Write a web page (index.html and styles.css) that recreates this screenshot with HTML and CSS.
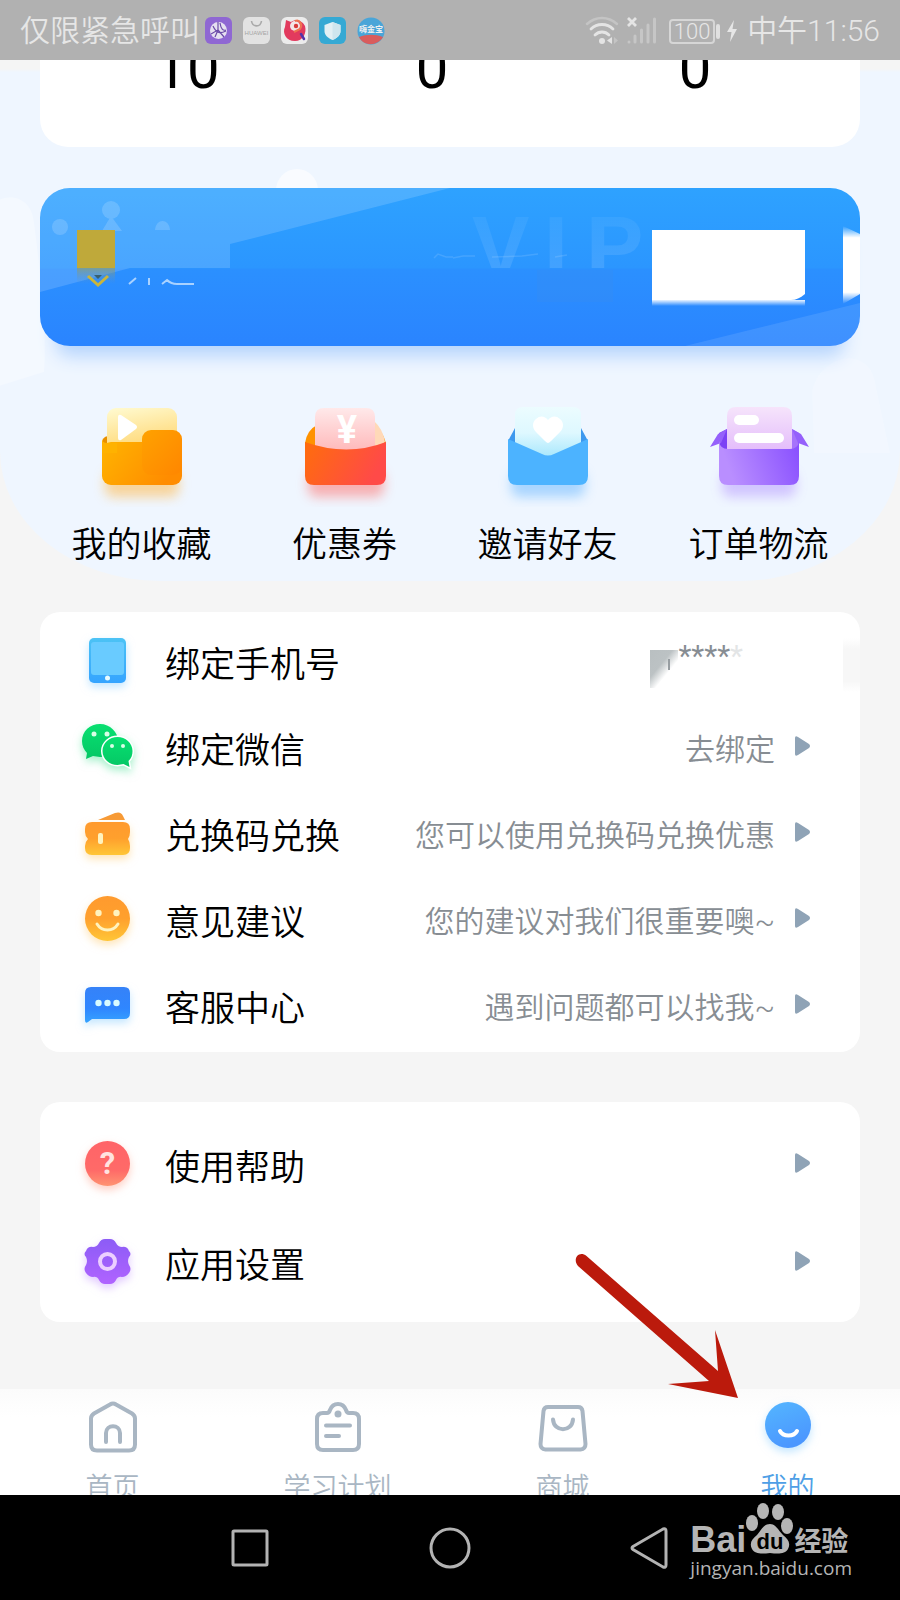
FILE: index.html
```
<!DOCTYPE html>
<html lang="zh-CN">
<head>
  <meta charset="UTF-8">
  <meta name="viewport" content="width=device-width, initial-scale=1">
  <title>我的</title>
  <link rel="stylesheet" href="styles.css">
</head>
<body>

<!-- Status bar -->
<header class="status-bar">
  <span>仅限紧急呼叫</span>
  <div class="status-apps">
    <svg width="27" height="27" viewBox="0 0 27 27">
      <rect width="27" height="27" rx="6" fill="#8f67d3"/>
      <circle cx="13.500" cy="13.500" r="8.500" fill="#e6e0f0"/>
      <path d="M13 5v8l-7 4M13 13l6 7M8 9c4 9 9 7 13 5M15 6c1 6 3 8 6 7M10 20l3-7" fill="none" stroke="#6b4aa8" stroke-width="1.200"/>
    </svg>
    <svg width="27" height="27" viewBox="0 0 27 27">
      <rect width="27" height="27" rx="6" fill="#e2e2e2"/>
      <path d="M8.500 4c1 6.500 9 6.500 10 0" fill="none" stroke="#a9a9a9" stroke-width="1.600"/>
      <text x="13.500" y="18" class="app-name" fill="#a5a5a5">HUAWEI</text>
    </svg>
    <svg width="27" height="27" viewBox="0 0 27 27">
      <rect width="27" height="27" rx="6" fill="#ececec"/>
      <path d="M5 3l5 2c5-4 12-1 14 4 2 7-2 15-10 15-9 0-13-8-10-14z" fill="#e23a5e"/>
      <circle cx="14" cy="9" r="5" fill="#f3e6e6"/>
      <circle cx="15" cy="9" r="2.200" fill="#d93a3a"/>
      <path d="M14 4c5-2 8 4 5 8l-6 3" fill="none" stroke="#ee7350" stroke-width="2"/>
      <path d="M20 17l3 5" stroke="#5533a8" stroke-width="2.500" stroke-linecap="round"/>
    </svg>
    <svg width="27" height="27" viewBox="0 0 27 27">
      <rect width="27" height="27" rx="6" fill="#35a9d4"/>
      <path d="M13.500 5l8 3v6c0 4-3 7-8 9-5-2-8-5-8-9V8z" fill="#e3f0f4"/>
      <path d="M13.500 5l8 3v6c0 4-3 7-8 9z" fill="#cfe6ee"/>
    </svg>
    <svg width="28" height="28" viewBox="0 0 28 28">
      <circle cx="14" cy="14" r="13.500" fill="#4aa5d8"/>
      <path d="M2 20c8-3 16-3 24 0-5 9-19 10-24 0z" fill="#d95c5c"/>
      <text x="14" y="15" class="app-name app-name-cn" fill="#f0f0f0">嗨金宝</text>
    </svg>
  </div>
  <div class="status-right">
    <svg width="72" height="30" viewBox="0 0 72 30" fill="none" stroke="#e4e4e4" stroke-linecap="round">
      <path d="M2 8c9-8 21-8 30 0" stroke="#c4c4c4" stroke-width="2.500"/>
      <path d="M6 13c6-6 16-6 22 0M10 19c4-4 10-4 14 0" stroke-width="2.800"/>
      <circle cx="17" cy="25" r="3" fill="#e4e4e4" stroke="none"/>
      <path d="M27 21v7l-5-3.500z" fill="#e4e4e4" stroke="none"/>
      <path d="M29 21v7l4-3.500z" fill="#c4c4c4" stroke="none"/>
      <path d="M43 2l8 8M51 2l-8 8" stroke-width="2.800" stroke-linecap="butt"/>
      <path d="M44 26v0M50 20v6M56.500 14v12M63 9v17M69.500 3v23" stroke="#c6c6c6" stroke-width="3"/>
    </svg>
    <div class="battery">100</div>
    <svg width="10" height="22" viewBox="0 0 10 22"><path d="M7 0L0 12h4.500L3 22l7-13H5.500z" fill="#e6e6e6"/></svg>
    <time>中午11:56</time>
  </div>
</header>

<main>
  <section class="hero">
    <svg class="hero-decor" viewBox="0 0 900 521" preserveAspectRatio="none">
      <circle cx="297" cy="130" r="21" fill="#fff" opacity=".6"/>
      <path d="M-20 170c5-40 50-44 54-8 4 30 14 110 10 150l-64 20z" fill="#fff" opacity=".3"/>
      <path d="M812 331c10-40 60-46 64-4l14 66h-76z" fill="#fff" opacity=".18"/>
    </svg>

    <div class="stats">
      <span>10</span>
      <span>0</span>
      <span>0</span>
    </div>

    <div class="vip-card">
      <svg viewBox="0 0 820 158" preserveAspectRatio="none">
        <defs>
          <linearGradient id="goldFade" x2="0" y2="1">
            <stop offset="0" stop-color="#8f9c6a" stop-opacity=".7"/>
            <stop offset="1" stop-color="#5c90c8" stop-opacity="0"/>
          </linearGradient>
          <linearGradient id="vipFade" x2="0" y2="1">
            <stop offset="0" stop-color="#fff" stop-opacity=".03"/>
            <stop offset="1" stop-color="#fff" stop-opacity=".14"/>
          </linearGradient>
          <linearGradient id="whiteFade" x2="0" y2="1">
            <stop offset="0" stop-color="#fff" stop-opacity="0"/>
            <stop offset=".15" stop-color="#fff"/>
            <stop offset=".85" stop-color="#fff"/>
            <stop offset="1" stop-color="#fff" stop-opacity="0"/>
          </linearGradient>
          <linearGradient id="whiteEnd" x2="0" y2="1">
            <stop offset="0" stop-color="#fff" stop-opacity=".9"/>
            <stop offset="1" stop-color="#fff" stop-opacity="0"/>
          </linearGradient>
          <clipPath id="vipClip"><rect width="820" height="80"/></clipPath>
        </defs>
        <path d="M0 0h410L190 56v24H90L0 104z" fill="#fff" opacity=".15"/>
        <path d="M645 158l175-43v43z" fill="#fff" opacity=".1"/>
        <g fill="#fff" opacity=".16">
          <circle cx="20" cy="39" r="8"/>
          <circle cx="71" cy="22" r="9"/>
          <path d="M71 28l11 15H62z"/>
          <path d="M115 42c1-12 14-12 15 0z"/>
        </g>
        <g class="vip-word" fill="url(#vipFade)" clip-path="url(#vipClip)">
          <text x="432" y="88">V</text>
          <text x="504" y="88">I</text>
          <text x="546" y="88">P</text>
        </g>
        <path d="M394 70l4-4 8 3h7M413 70l10-2h12M452 69l30-1 16-2M515 69l12-2" fill="none" stroke="#fff" stroke-width="1.500" opacity=".12"/>
        <rect x="37" y="42" width="38" height="38" fill="#bfa93a"/>
        <rect x="37" y="80" width="38" height="16" fill="url(#goldFade)"/>
        <path d="M48 88l10 9 10-9" fill="none" stroke="#c9b53c" stroke-width="3"/>
        <path d="M54 87h8l-4 4z" fill="#38606e"/>
        <path d="M89 96l7-6M109 97v-7M122 96l5-4c3 3 5 4 10 4h17" fill="none" stroke="#d4e8ff" stroke-width="2" opacity=".75"/>
        <rect x="497" y="82" width="76" height="32" fill="#4a90e0" opacity=".15"/>
        <path d="M612 42h153v64c-5 4-9 6-14 6H612z" fill="#fff"/>
        <rect x="612" y="112" width="153" height="6" fill="url(#whiteEnd)"/>
        <path d="M803 38l17 8v60l-17 10z" fill="url(#whiteFade)"/>
      </svg>
    </div>

    <nav class="quick">
      <a href="#favorites">
        <svg width="110" height="110" viewBox="0 0 110 110">
          <defs>
            <linearGradient id="fold" x2="1" y2=".4"><stop stop-color="#ffb400"/><stop offset="1" stop-color="#ff8c00"/></linearGradient>
            <linearGradient id="foldTab" x2="1" y2="1"><stop stop-color="#ffa200"/><stop offset="1" stop-color="#ff8600"/></linearGradient>
            <linearGradient id="foldSheet" x2=".3" y2="1"><stop stop-color="#fffbd2"/><stop offset="1" stop-color="#ffd672"/></linearGradient>
            <filter id="soft" x="-30%" y="-60%" width="160%" height="260%"><feGaussianBlur stdDeviation="6"/></filter>
          </defs>
          <rect x="18" y="74" width="74" height="26" rx="8" fill="#ffb84a" opacity=".55" filter="url(#soft)"/>
          <path d="M15 46q0-6 6-7l30-3v20H15z" fill="#e89000"/>
          <rect x="20" y="11" width="70" height="44" rx="9" fill="url(#foldSheet)"/>
          <path d="M31 20q0-3 3-2l15 10q2 2 0 4L34 43q-3 1-3-2z" fill="#fff"/>
          <rect x="15" y="45" width="80" height="43" rx="9" fill="url(#fold)"/>
          <path d="M15 41q0 5 5 5h10v10H15z" fill="#ffb200"/>
          <rect x="55" y="33" width="40" height="45" rx="9" fill="url(#foldTab)"/>
        </svg>
        <span>我的收藏</span>
      </a>
      <a href="#coupons">
        <svg width="110" height="110" viewBox="0 0 110 110">
          <defs>
            <linearGradient id="coupon" x2="1" y2=".3"><stop stop-color="#ff6d0c"/><stop offset="1" stop-color="#ff4a48"/></linearGradient>
            <linearGradient id="couponSheet" x2="0" y2="1"><stop stop-color="#ffe9ea"/><stop offset="1" stop-color="#ffb9ba"/></linearGradient>
          </defs>
          <rect x="18" y="74" width="76" height="26" rx="8" fill="#ff6a66" opacity=".5" filter="url(#soft)"/>
          <path d="M15 46q2-13 12-18h56q10 6 13 18l-20 8H30z" fill="#ff9200"/>
          <path d="M84 24q9 8 11 21l-11 8z" fill="#ffd9b8"/>
          <path d="M25 20q0-9 9-9h42q9 0 9 9v34H25z" fill="url(#couponSheet)"/>
          <text x="57" y="46" class="yen">¥</text>
          <path d="M15 45q42 15 81 0v34q0 9-9 9H24q-9 0-9-9z" fill="url(#coupon)"/>
        </svg>
        <span>优惠券</span>
      </a>
      <a href="#invite">
        <svg width="110" height="110" viewBox="0 0 110 110">
          <defs>
            <linearGradient id="inviteSheet" x2="0" y2="1"><stop stop-color="#ecfcff"/><stop offset=".5" stop-color="#def8ff"/><stop offset="1" stop-color="#a4e6fc"/></linearGradient>
          </defs>
          <rect x="18" y="74" width="74" height="26" rx="8" fill="#62b4ff" opacity=".5" filter="url(#soft)"/>
          <path d="M15 44l7-13h66l7 13-40 18z" fill="#3d98ee"/>
          <path d="M22 18q0-8 8-8h50q8 0 8 8v35L55 62 22 53z" fill="url(#inviteSheet)"/>
          <path d="M55 46q-1 0-3-2L43 35c-4-4-4-10 0-13 4-4 9-3 12 1 3-4 8-5 12-1 4 3 4 9 0 13l-9 9q-2 2-3 2z" fill="#fff"/>
          <path d="M15 42l34 15q6 3 12 0l34-15v37q0 9-9 9H24q-9 0-9-9z" fill="#4cb3ff"/>
        </svg>
        <span>邀请好友</span>
      </a>
      <a href="#orders">
        <svg width="110" height="110" viewBox="0 0 110 110">
          <defs>
            <linearGradient id="box" x2="1" y2="-.2"><stop stop-color="#b98eff"/><stop offset="1" stop-color="#864cff"/></linearGradient>
            <linearGradient id="boxSheet" x2="0" y2="1"><stop stop-color="#f6e4fb"/><stop offset="1" stop-color="#e3bbfb"/></linearGradient>
          </defs>
          <rect x="18" y="74" width="74" height="26" rx="8" fill="#a47cff" opacity=".4" filter="url(#soft)"/>
          <path d="M15 36l8-4v22H15z" fill="#7c41f5"/>
          <path d="M95 36l-7-4v22h7z" fill="#a673fb"/>
          <path d="M6 50l8-13 9-5-6 14zM105 50l-8-13-9-5 6 14z" fill="#9560fb"/>
          <path d="M23 19q0-9 9-9h47q9 0 9 9v36H23z" fill="url(#boxSheet)"/>
          <rect x="30" y="18" width="25" height="10" rx="5" fill="#fff"/>
          <rect x="30" y="36" width="50" height="10" rx="5" fill="#fff"/>
          <path d="M15 44q1 8 9 8h62q8 0 9-8v35q0 9-9 9H24q-9 0-9-9z" fill="url(#box)"/>
        </svg>
        <span>订单物流</span>
      </a>
    </nav>
  </section>

  <!-- Account list -->
  <section class="card account">
    <a class="row" href="#phone">
      <svg class="row-icon" viewBox="0 0 54 60">
        <defs><linearGradient id="phone" x2="0" y2="1"><stop stop-color="#4cc3f5"/><stop offset="1" stop-color="#35a4ff"/></linearGradient></defs>
        <rect x="9" y="5" width="37" height="45" rx="5" fill="url(#phone)" class="glow-blue"/>
        <rect x="11" y="9" width="33" height="33" rx="3" fill="#69cbff"/>
        <circle cx="27.500" cy="45" r="2.500" fill="#e8fbff"/>
      </svg>
      <span class="row-label">绑定手机号</span>
      <span class="row-hint masked">
        <svg width="28" height="38" viewBox="0 0 28 38">
          <defs><linearGradient id="smudge" x2=".9" y2="1"><stop stop-color="#b9bfc1"/><stop offset=".4" stop-color="#bcc2c4"/><stop offset=".65" stop-color="#fff"/></linearGradient></defs>
          <path d="M0 0h28v38H0z" fill="url(#smudge)"/>
          <path d="M19 9v11" stroke="#989ea2" stroke-width="2"/>
        </svg>****<i>*</i>
      </span>
      <span class="row-smear"></span>
    </a>
    <a class="row" href="#wechat">
      <svg class="row-icon" viewBox="0 0 54 60">
        <defs><linearGradient id="wx" x2="0" y2="1"><stop stop-color="#07e070"/><stop offset="1" stop-color="#05c765"/></linearGradient></defs>
        <g class="glow-green">
          <path d="M20 5C10 5 2 12 2 22c0 5 2 9 5 12l-1 6 7-3 7 1c10 0 18-7 18-16S30 5 20 5z" fill="url(#wx)"/>
          <path d="M37.500 18c-8 0-15 6-15 14s7 14 15 14l6-1 6 3-1-6c3-3 4-6 4-10 0-8-7-14-15-14z" fill="url(#wx)" stroke="#fff" stroke-width="3" paint-order="stroke"/>
        </g>
        <g fill="#d9ffe6"><circle cx="14" cy="15" r="2.500"/><circle cx="27" cy="15" r="2.500"/><circle cx="32" cy="27" r="2"/><circle cx="43" cy="27" r="2"/></g>
      </svg>
      <span class="row-label">绑定微信</span>
      <span class="row-hint">去绑定</span>
      <svg class="row-arrow" viewBox="0 0 15 20"><path d="M0 2q0-3 3-1l11 7q2 2 0 4L3 19q-3 2-3-1z"/></svg>
    </a>
    <a class="row" href="#redeem">
      <svg class="row-icon" viewBox="0 0 54 60">
        <defs><linearGradient id="orange" x2="0" y2="1"><stop stop-color="#ff9a2e"/><stop offset=".5" stop-color="#ffa02d"/><stop offset="1" stop-color="#ffc637"/></linearGradient></defs>
        <path d="M18 15l17-7q6-2 8 3l2 4z" fill="#f79a35"/>
        <path d="M12 17h31q7 0 7 7v3q0 4-2 7 2 3 2 7v2q0 7-7 7H12q-7 0-7-7v-2q0-4 3-7-3-3-3-7v-3q0-7 7-7z" fill="url(#orange)" class="glow-orange"/>
        <rect x="18" y="28" width="5" height="11" rx="2" fill="#fff3bf"/>
      </svg>
      <span class="row-label">兑换码兑换</span>
      <span class="row-hint">您可以使用兑换码兑换优惠</span>
      <svg class="row-arrow" viewBox="0 0 15 20"><path d="M0 2q0-3 3-1l11 7q2 2 0 4L3 19q-3 2-3-1z"/></svg>
    </a>
    <a class="row" href="#feedback">
      <svg class="row-icon" viewBox="0 0 54 60">
        <circle cx="27.500" cy="27.500" r="22.500" fill="url(#orange)" class="glow-orange"/>
        <circle cx="18.500" cy="22" r="3.200" fill="#fff3bf"/>
        <circle cx="36.500" cy="22" r="3.200" fill="#fff3bf"/>
        <path d="M17 33c5 8 16 8 21 0" fill="none" stroke="#fff3bf" stroke-width="3" stroke-linecap="round"/>
      </svg>
      <span class="row-label">意见建议</span>
      <span class="row-hint">您的建议对我们很重要噢~</span>
      <svg class="row-arrow" viewBox="0 0 15 20"><path d="M0 2q0-3 3-1l11 7q2 2 0 4L3 19q-3 2-3-1z"/></svg>
    </a>
    <a class="row" href="#service">
      <svg class="row-icon" viewBox="0 0 54 60">
        <defs><linearGradient id="chat" x2="0" y2="1"><stop stop-color="#3582f8"/><stop offset=".6" stop-color="#2f86ff"/><stop offset="1" stop-color="#35a3ff"/></linearGradient></defs>
        <path d="M11 10h33q6 0 6 6v20q0 6-6 6H12l-4 3q-3 2-3-2V16q0-6 6-6z" fill="url(#chat)" class="glow-blue"/>
        <g fill="#d8fbff"><circle cx="18.500" cy="26" r="3.200"/><circle cx="27.500" cy="26" r="3.200"/><circle cx="36.500" cy="26" r="3.200"/></g>
      </svg>
      <span class="row-label">客服中心</span>
      <span class="row-hint">遇到问题都可以找我~</span>
      <svg class="row-arrow" viewBox="0 0 15 20"><path d="M0 2q0-3 3-1l11 7q2 2 0 4L3 19q-3 2-3-1z"/></svg>
    </a>
  </section>

  <!-- Help and settings -->
  <section class="card system">
    <a class="row" href="#help">
      <svg class="row-icon" viewBox="0 0 54 60">
        <defs><linearGradient id="red" x2="0" y2="1"><stop stop-color="#ff6468"/><stop offset=".65" stop-color="#ff6a68"/><stop offset="1" stop-color="#ff9472"/></linearGradient></defs>
        <circle cx="27.500" cy="27.500" r="22.500" fill="url(#red)" class="glow-red"/>
        <text x="27.500" y="38" class="question">?</text>
      </svg>
      <span class="row-label">使用帮助</span>
      <svg class="row-arrow" viewBox="0 0 15 20"><path d="M0 2q0-3 3-1l11 7q2 2 0 4L3 19q-3 2-3-1z"/></svg>
    </a>
    <a class="row" href="#settings">
      <svg class="row-icon" viewBox="0 0 54 60">
        <defs><linearGradient id="violet" x2="0" y2="1"><stop stop-color="#8c5cf6"/><stop offset="1" stop-color="#b063ff"/></linearGradient></defs>
        <path d="M25 5h5q4 0 6 4 2 4 6 4 5-1 7 4 3 3 0 6-2 4 0 8 3 4 0 8-3 4-7 4-4-1-6 3-2 4-6 4h-5q-4 0-6-4-2-4-6-3-4 0-7-4-3-4 0-8 2-4 0-8-3-3 0-6 2-5 7-4 4 0 6-4 2-4 6-4z" fill="url(#violet)" class="glow-violet"/>
        <circle cx="27.500" cy="27.500" r="7.500" fill="none" stroke="#eccfff" stroke-width="4"/>
      </svg>
      <span class="row-label">应用设置</span>
      <svg class="row-arrow" viewBox="0 0 15 20"><path d="M0 2q0-3 3-1l11 7q2 2 0 4L3 19q-3 2-3-1z"/></svg>
    </a>
  </section>
</main>

<footer>
  <nav class="tabs">
    <a href="#home">
      <svg width="52" height="54" viewBox="0 0 52 54" class="line">
        <path d="M23 5.500q3-2 6 0l16 9q3 2 3 5v26q0 6-6 6H10q-6 0-6-6v-26q0-3 3-5z"/>
        <path d="M19 43v-9c0-9 14-9 14 0v9"/>
      </svg>
      <span>首页</span>
    </a>
    <a href="#plan">
      <svg width="52" height="54" viewBox="0 0 52 54" class="line">
        <path d="M11 14h4q2 0 3-3c3-8 13-8 16 0q1 3 3 3h4q6 0 6 6v25q0 6-6 6H11q-6 0-6-6V20q0-6 6-6z"/>
        <path d="M14 26.500h24M14 37h13"/>
        <circle cx="26" cy="15" r="3.500" class="dot"/>
      </svg>
      <span>学习计划</span>
    </a>
    <a href="#shop">
      <svg width="52" height="54" viewBox="0 0 52 54" class="line">
        <path d="M11 8h30q4 0 4.500 4l3 33q0 5-5 5.500h-35q-5-.5-5-5.500l3-33q.5-4 4.500-4z"/>
        <path d="M16 20.500c1 13 19 13 20 0"/>
      </svg>
      <span>商城</span>
    </a>
    <a href="#me" class="active">
      <svg width="52" height="54" viewBox="0 0 52 54">
        <defs><linearGradient id="me" x2=".4" y2="1"><stop stop-color="#54b6ff"/><stop offset="1" stop-color="#4b97ff"/></linearGradient></defs>
        <circle cx="26" cy="26" r="23" fill="url(#me)" class="glow-blue"/>
        <path d="M18 32c3 6 14 6 17 0" fill="none" stroke="#fff" stroke-width="4" stroke-linecap="round"/>
      </svg>
      <span>我的</span>
    </a>
  </nav>

  <svg class="pointer" width="180" height="155" viewBox="0 0 180 155">
    <path d="M16.500 10L148 125l-3-41 23 68-70-14 41-3L8 20c-6-7 1-16 8.500-10z" fill="#bb1a0c"/>
  </svg>

  <div class="soft-keys">
    <button type="button" aria-label="最近任务">
      <svg width="44" height="44" viewBox="0 0 44 44"><rect x="5" y="5" width="34" height="34" rx="1"/></svg>
    </button>
    <button type="button" aria-label="主屏幕">
      <svg width="44" height="44" viewBox="0 0 44 44"><circle cx="22" cy="22" r="19"/></svg>
    </button>
    <button type="button" aria-label="返回">
      <svg width="44" height="44" viewBox="0 0 44 44"><path d="M5 20.500L35 3q3-1 3 2v34q0 3-3 2L5 23.500q-2-1.500 0-3z"/></svg>
    </button>
  </div>

  <!-- Watermark -->
  <div class="watermark">
    <div class="watermark-logo">
      <b>Bai</b>
      <svg width="48" height="52" viewBox="0 0 48 52">
        <g fill="#b5b5b5">
          <ellipse cx="6" cy="21" rx="6" ry="8"/>
          <ellipse cx="17" cy="9" rx="6" ry="8"/>
          <ellipse cx="32" cy="10" rx="6" ry="8"/>
          <ellipse cx="41" cy="24" rx="6" ry="8"/>
          <path d="M24 22c6 0 8 6 13 11 5 4 8 8 5 14-3 5-9 5-18 4-9 1-15 1-18-4-3-6 0-10 5-14 4-4 6-11 13-11z"/>
        </g>
        <text x="24" y="47">du</text>
      </svg>
      <strong>经验</strong>
    </div>
    <span>jingyan.baidu.com</span>
  </div>
</footer>

</body>
</html>
```
FILE: styles.css
```
* {
  box-sizing: border-box;
}
body {
  margin: 0;
  min-height: 100vh;
  display: flex;
  flex-direction: column;
  background: #f5f5f5;
  color: #000;
  font-family: Roboto, "Noto Sans CJK SC", sans-serif;
  font-weight: 350;
}
a {
  color: inherit;
  text-decoration: none;
}
svg {
  display: block;
  flex: none;
}

/* Status bar */
.status-bar {
  position: relative;
  z-index: 2;
  display: flex;
  align-items: center;
  height: 60px;
  padding: 2px 20px 0;
  background: #b1b1b1;
  color: #e6e6e6;
  font-size: 30px;
  line-height: 40px;
}
.status-apps {
  display: flex;
  gap: 11px;
  margin-left: 5px;
}
.app-name {
  font-family: "Liberation Sans", sans-serif;
  font-size: 6px;
  text-anchor: middle;
}
.app-name-cn {
  font-family: "Noto Sans CJK SC", sans-serif;
  font-size: 8px;
  font-weight: 700;
}
.status-right {
  display: flex;
  align-items: center;
  margin-left: auto;
}
.battery {
  position: relative;
  width: 46px;
  height: 25px;
  margin: 0 12px;
  border: 2px solid #d6d6d6;
  border-radius: 4px;
  font-size: 22px;
  line-height: 22px;
  text-align: center;
}
.battery::after {
  content: "";
  position: absolute;
  top: 3px;
  right: -7px;
  width: 4px;
  height: 15px;
  border-radius: 2px;
  background: #e0e0e0;
}
.status-right time {
  margin-left: 10px;
}

/* Top area */
main {
  flex: 1;
}
.hero {
  position: relative;
  display: flow-root;
  padding: 0 40px 11px;
  border-radius: 0 0 160px 160px / 0 0 130px 130px;
  background: linear-gradient(#f5f5f5 9px, #eff6ff 12px);
}
.hero-decor {
  position: absolute;
  top: 0;
  left: 0;
  width: 100%;
  height: 100%;
}
.stats {
  position: relative;
  display: grid;
  grid-template-columns: 294fr 196fr 330fr;
  height: 127px;
  margin-top: -40px;
  border-radius: 28px;
  background: #fff;
  font-size: 58px;
  font-weight: 400;
  line-height: 96px;
  text-align: center;
}
.vip-card {
  position: relative;
  height: 158px;
  margin-top: 41px;
  border-radius: 30px;
  background: linear-gradient(#2ea2ff 0, #2b96ff 80px, #2b90ff 81px, #2a84ff);
  box-shadow: 0 26px 18px -16px #b5d4fd;
}
.vip-card svg {
  width: 100%;
  height: 100%;
  border-radius: 30px;
}
.vip-word {
  font-family: "Liberation Sans", sans-serif;
  font-size: 86px;
  font-weight: 700;
}
.quick {
  position: relative;
  display: grid;
  grid-template-columns: 203fr 203fr 203fr 219fr;
  margin: 51px -8px 0 0;
  font-size: 35px;
  line-height: 48px;
}
.quick a {
  display: flex;
  flex-direction: column;
  align-items: center;
  gap: 15px;
}
.yen {
  fill: #fff;
  font-size: 38px;
  font-weight: 700;
  text-anchor: middle;
}

/* Cards */
.card {
  margin: 31px 40px 0;
  border-radius: 20px;
  background: #fff;
}
.account {
  padding: 8px 0 2px;
}
.system {
  margin: 50px 40px 67px;
  padding: 15px 0 9px;
}
.row {
  position: relative;
  display: flex;
  align-items: center;
  height: 86px;
  padding: 0 50px 0 40px;
}
.system .row {
  height: 98px;
}
.row-icon {
  width: 54px;
  height: 60px;
  overflow: visible;
}
.row-label {
  margin-left: 31px;
  padding-bottom: 4px;
  font-size: 35px;
}
.row-hint {
  margin-left: auto;
  padding-bottom: 4px;
  color: #878d93;
  font-size: 30px;
}
.row-arrow {
  width: 15px;
  height: 20px;
  margin: 0 0 6px 20px;
  fill: #8fa3b6;
}
.system .row-arrow {
  margin-left: auto;
}
.masked {
  display: flex;
  align-items: flex-start;
  margin-right: 67px;
  padding-bottom: 0;
  font-weight: 400;
}
.masked svg {
  margin-top: 12px;
}
.masked i {
  color: #e3e5e6;
  font-style: normal;
}
.row-smear {
  position: absolute;
  top: 18px;
  right: 0;
  width: 17px;
  height: 54px;
  background: linear-gradient(#fff, #f7f7f7 20%, #f7f7f7 80%, #fff);
}
.question {
  fill: #ffe3e0;
  font-size: 31px;
  font-weight: 700;
  text-anchor: middle;
}
.glow-blue { filter: drop-shadow(0 4px 4px #8fd0ff88); }
.glow-green { filter: drop-shadow(0 4px 4px #54e39c88); }
.glow-orange { filter: drop-shadow(0 4px 4px #ffcf7a88); }
.glow-red { filter: drop-shadow(0 4px 4px #ffa59088); }
.glow-violet { filter: drop-shadow(0 4px 4px #c79bff88); }

/* Bottom tabs */
footer {
  position: relative;
}
.tabs {
  display: grid;
  grid-template-columns: repeat(4, 1fr);
  height: 106px;
  padding-top: 10px;
  overflow: hidden;
  background: linear-gradient(#fbfbfb, #fff 28px);
  color: #a9b6c3;
  font-size: 27px;
  line-height: 40px;
}
.tabs a {
  display: flex;
  flex-direction: column;
  align-items: center;
  gap: 15px;
}
.tabs .active {
  color: #4f9fe6;
}
.tabs svg {
  overflow: visible;
}
.line {
  fill: none;
  stroke: #a9b6c3;
  stroke-width: 4;
  stroke-linecap: round;
}
.line .dot {
  fill: #a9b6c3;
  stroke: none;
}
.pointer {
  position: absolute;
  top: -143px;
  right: 150px;
}
.soft-keys {
  display: flex;
  justify-content: center;
  gap: 156px;
  height: 105px;
  background: #000;
}
.soft-keys button {
  padding: 0;
  border: none;
  background: none;
}
.soft-keys svg {
  fill: none;
  stroke: #b3b3b3;
  stroke-width: 3;
}

/* Watermark */
.watermark {
  position: absolute;
  right: 48px;
  bottom: 20px;
  color: #b5b5b5;
  font-family: "Open Sans", sans-serif;
  font-size: 19px;
  font-weight: 400;
  line-height: 24px;
}
.watermark-logo {
  display: flex;
  align-items: flex-end;
  margin-bottom: 2px;
  line-height: 28px;
}
.watermark b {
  font-family: "Liberation Sans", sans-serif;
  font-size: 36px;
}
.watermark strong {
  font-family: "Noto Sans CJK SC", sans-serif;
  font-size: 27px;
}
.watermark text {
  fill: #000;
  font-family: "Liberation Sans", sans-serif;
  font-size: 22px;
  font-weight: 700;
  text-anchor: middle;
}
```
